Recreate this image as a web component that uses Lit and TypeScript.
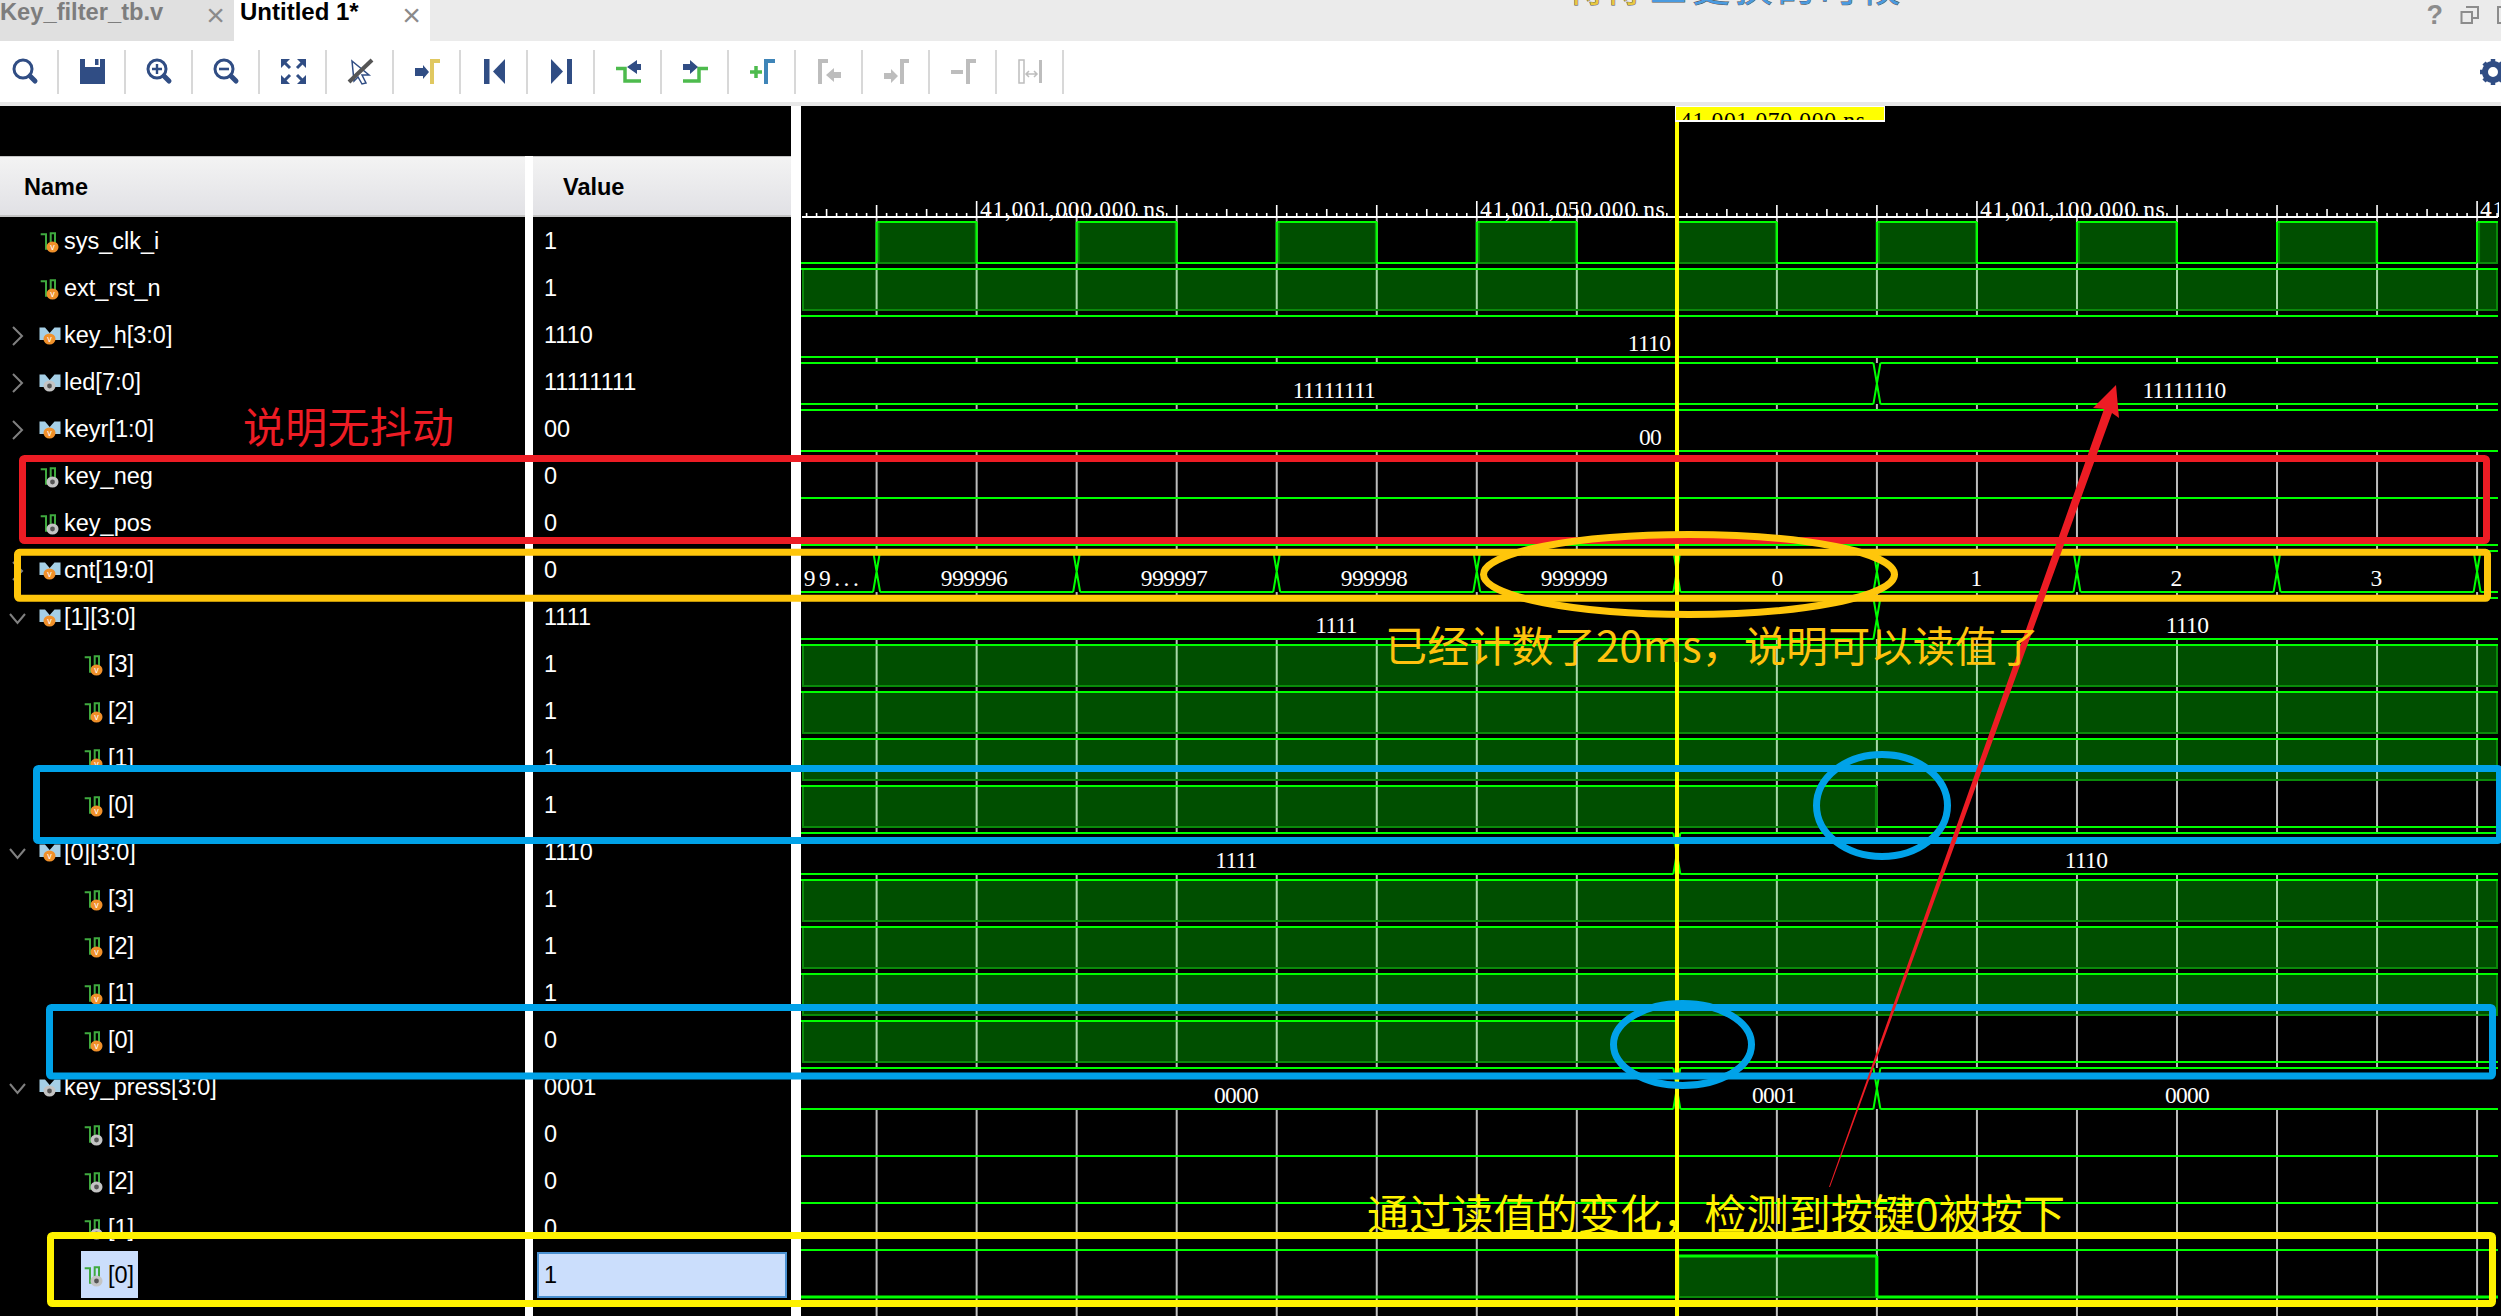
import { LitElement, html, svg, css } from 'lit';
import { customElement } from 'lit/decorators.js';

// --- waveform geometry, in page pixels ---
const END = 2498;
const T = (k: number) => 876.6 + 100.03 * k;
const EDGES = Array.from({ length: 17 }, (_, k) => T(k));
const top = (i: number) => 222 + 47 * i;
const bot = (i: number) => 263 + 47 * i;
const GREEN = '#00ff00';
const DIM = '#0a8a0a';
const FILL = '#004f00';
const NUM_FONT = "'Liberation Serif', serif";

type Wave =
  | { kind: 'bit'; highs: number[][]; strong?: boolean; thick?: boolean }
  | { kind: 'bus'; stops: number[]; labels: [string, number][] };

interface Row {
  name: string;
  value: string;
  icon: 'wire' | 'bus';
  tone: 'orange' | 'gray';
  child?: boolean;
  twist?: 'right' | 'down';
  selected?: boolean;
  wave: Wave;
}

const HIGH: Wave = { kind: 'bit', highs: [[801, END]] };
const LOW: Wave = { kind: 'bit', highs: [] };
const clockHighs: number[][] = [];
for (let k = 0; k < 17; k += 2) clockHighs.push([T(k), k + 1 < 17 ? T(k + 1) : END]);

const ROWS: Row[] = [
  { name: 'sys_clk_i', value: '1', icon: 'wire', tone: 'orange', wave: { kind: 'bit', highs: clockHighs, strong: true } },
  { name: 'ext_rst_n', value: '1', icon: 'wire', tone: 'orange', wave: HIGH },
  { name: 'key_h[3:0]', value: '1110', icon: 'bus', tone: 'orange', twist: 'right', wave: { kind: 'bus', stops: [], labels: [['1110', 1649]] } },
  { name: 'led[7:0]', value: '11111111', icon: 'bus', tone: 'gray', twist: 'right', wave: { kind: 'bus', stops: [T(10)], labels: [['11111111', 1334], ['11111110', 2184]] } },
  { name: 'keyr[1:0]', value: '00', icon: 'bus', tone: 'orange', twist: 'right', wave: { kind: 'bus', stops: [], labels: [['00', 1650]] } },
  { name: 'key_neg', value: '0', icon: 'wire', tone: 'gray', wave: LOW },
  { name: 'key_pos', value: '0', icon: 'wire', tone: 'gray', wave: LOW },
  {
    name: 'cnt[19:0]', value: '0', icon: 'bus', tone: 'orange', twist: 'right',
    wave: {
      kind: 'bus',
      stops: EDGES.filter((_, k) => k % 2 === 0),
      labels: [['99...', 833], ['999996', 974], ['999997', 1174], ['999998', 1374], ['999999', 1574], ['0', 1777], ['1', 1976], ['2', 2176], ['3', 2376]],
    },
  },
  { name: '[1][3:0]', value: '1111', icon: 'bus', tone: 'orange', twist: 'down', wave: { kind: 'bus', stops: [T(10)], labels: [['1111', 1336], ['1110', 2187]] } },
  { name: '[3]', value: '1', icon: 'wire', tone: 'orange', child: true, wave: HIGH },
  { name: '[2]', value: '1', icon: 'wire', tone: 'orange', child: true, wave: HIGH },
  { name: '[1]', value: '1', icon: 'wire', tone: 'orange', child: true, wave: HIGH },
  { name: '[0]', value: '1', icon: 'wire', tone: 'orange', child: true, wave: { kind: 'bit', highs: [[801, T(10)]] } },
  { name: '[0][3:0]', value: '1110', icon: 'bus', tone: 'orange', twist: 'down', wave: { kind: 'bus', stops: [T(8)], labels: [['1111', 1236], ['1110', 2086]] } },
  { name: '[3]', value: '1', icon: 'wire', tone: 'orange', child: true, wave: HIGH },
  { name: '[2]', value: '1', icon: 'wire', tone: 'orange', child: true, wave: HIGH },
  { name: '[1]', value: '1', icon: 'wire', tone: 'orange', child: true, wave: HIGH },
  { name: '[0]', value: '0', icon: 'wire', tone: 'orange', child: true, wave: { kind: 'bit', highs: [[801, T(8)]] } },
  { name: 'key_press[3:0]', value: '0001', icon: 'bus', tone: 'gray', twist: 'down', wave: { kind: 'bus', stops: [T(8), T(10)], labels: [['0000', 1236], ['0001', 1774], ['0000', 2187]] } },
  { name: '[3]', value: '0', icon: 'wire', tone: 'gray', child: true, wave: LOW },
  { name: '[2]', value: '0', icon: 'wire', tone: 'gray', child: true, wave: LOW },
  { name: '[1]', value: '0', icon: 'wire', tone: 'gray', child: true, wave: LOW },
  { name: '[0]', value: '1', icon: 'wire', tone: 'gray', child: true, selected: true, wave: { kind: 'bit', highs: [[T(8), T(10)]], strong: true, thick: true } },
];

// --- toolbar icons, drawn in page coordinates ---
const BLUE = '#304d84';
const GOLD = '#e0c860';
const LEAF = '#4dbb4d';
const SKY = '#3f85b8';
const MUTE = '#bdbdbd';

const lens = (cx: number, extra = svg``) => svg`
  <circle cx=${cx} cy="69" r="9" fill="none" stroke=${BLUE} stroke-width="3"></circle>
  <line x1=${cx + 7} y1="76" x2=${cx + 12} y2="81" stroke=${BLUE} stroke-width="5" stroke-linecap="round"></line>
  ${extra}`;

const corner = (x: number, y: number, dx: number, dy: number) => svg`
  <polygon points="${x},${y} ${x + 9 * dx},${y} ${x},${y + 9 * dy}" fill=${BLUE}></polygon>
  <line x1=${x + 3 * dx} y1=${y + 3 * dy} x2=${x + 9 * dx} y2=${y + 9 * dy} stroke=${BLUE} stroke-width="3"></line>`;

const gamma = (x: number, w: number, color: string) => svg`
  <path d="M${x} 59H${x + w}V63H${x + 4}V84H${x}Z" fill=${color}></path>`;

const TOOLS = [
  lens(23),
  svg`<path d="M80 59H85V67H100V59H105V84H80Z" fill=${BLUE}></path><rect x="95" y="59" width="3.5" height="6" fill=${BLUE}></rect>`,
  lens(157, svg`<path d="M157 64V74M152 69H162" stroke=${BLUE} stroke-width="2.4"></path>`),
  lens(224, svg`<path d="M219 69H229" stroke=${BLUE} stroke-width="2.6"></path>`),
  svg`${corner(281, 59, 1, 1)}${corner(306, 59, -1, 1)}${corner(281, 84, 1, -1)}${corner(306, 84, -1, -1)}`,
  svg`<path d="M352 61L369 75H362L366 83L362 84L358 77L354 81Z" fill="#fff" stroke=${BLUE} stroke-width="1.5"></path>
    <line x1="349" y1="82" x2="372" y2="60" stroke="#555" stroke-width="4"></line>`,
  svg`<path d="M415 68H423V65L429 72L423 79V76H415Z" fill=${BLUE}></path>${gamma(430, 10, GOLD)}`,
  svg`<rect x="484" y="59" width="5.5" height="25" fill=${BLUE}></rect><polygon points="505,59 505,84 493,71.5" fill=${BLUE}></polygon>`,
  svg`<polygon points="551,59 551,84 563,71.5" fill=${BLUE}></polygon><rect x="567" y="59" width="5" height="25" fill=${BLUE}></rect>`,
  svg`<path d="M616 68.5H625V81H641" fill="none" stroke=${LEAF} stroke-width="3.5"></path>
    <path d="M627 67L637 60V64H641V70H637V74Z" fill=${BLUE}></path>`,
  svg`<path d="M683 81H699V68.5H708" fill="none" stroke=${LEAF} stroke-width="3.5"></path>
    <path d="M683 64H690V60L698 67L690 74V70H683Z" fill=${BLUE}></path>`,
  svg`<path d="M750 72H762M756 66V78" stroke=${LEAF} stroke-width="3.5"></path>${gamma(764, 11, SKY)}`,
  svg`${gamma(818, 10, MUTE)}<path d="M826 75L834 68V72H841V78H834V82Z" fill=${MUTE}></path>`,
  svg`<path d="M884 73H891V69L898 76L891 83V79H884Z" fill=${MUTE}></path>${gamma(900, 9, MUTE)}`,
  svg`<rect x="951" y="70" width="12" height="4" fill=${MUTE}></rect>${gamma(966, 10, MUTE)}`,
  svg`<rect x="1019" y="60" width="5" height="23" fill="none" stroke=${MUTE} stroke-width="1.5"></rect>
    <rect x="1039" y="60" width="3" height="23" fill=${MUTE}></rect>
    <path d="M1026 74H1037M1029 71L1026 74L1029 77M1034 71L1037 74L1034 77" fill="none" stroke=${MUTE} stroke-width="1.5"></path>`,
];

@customElement('app-root')
export class AppRoot extends LitElement {
  static styles = css`
    :host {
      display: block;
      position: relative;
      width: 2501px;
      height: 1316px;
      overflow: hidden;
      background: #000;
      font-family: 'Liberation Sans', Arial, sans-serif;
    }

    .tabbar {
      display: flex;
      height: 41px;
      background: #ebebeb;
      font-size: 24px;
      font-weight: bold;
      line-height: 24px;
    }
    .tab {
      display: flex;
      justify-content: space-between;
      box-sizing: border-box;
    }
    .tab .close {
      font-weight: normal;
      font-size: 32px;
      line-height: 30px;
      color: #8a8a8a;
    }
    .tab.off {
      width: 234px;
      background: #e0e0e0;
      color: #7d7d7d;
      padding-right: 9px;
      font-size: 23.7px;
    }
    .tab.on {
      width: 196px;
      background: #fff;
      color: #000;
      padding: 0 9px 0 6px;
    }
    .win {
      margin-left: auto;
      display: flex;
      align-items: center;
      gap: 17px;
      height: 30px;
      margin-right: -16px;
      color: #8c8c8c;
      font-size: 27px;
    }

    .toolbar {
      display: flex;
      height: 61px;
      background: #fff;
      margin-left: -8px;
      align-items: center;
    }
    .tool {
      display: block;
      width: 65px;
      height: 61px;
    }
    .sep {
      width: 2px;
      height: 44px;
      background: #d8d8d8;
    }
    .gear {
      margin-left: auto;
      margin-right: -5px;
    }
    .strip {
      height: 4px;
      background: #e8e8e8;
    }

    .main {
      display: grid;
      grid-template-columns: 525px 8px 258px 10px 1fr;
      height: 1210px;
    }
    .col {
      background: #000;
      padding-top: 50px;
      color: #fff;
      font-size: 23.5px;
    }
    .head {
      box-sizing: border-box;
      height: 61px;
      padding-top: 2px;
      display: flex;
      align-items: center;
      font-weight: bold;
      color: #000;
      background: linear-gradient(#f3f3f3, #e1e1e5);
      border-top: 1px solid #c4c4c4;
      border-bottom: 2px solid #c4c4c4;
    }
    .name .head {
      padding-left: 24px;
    }
    .value .head {
      padding-left: 30px;
    }
    .gutter {
      margin-top: 50px;
      background: #fff;
    }
    .rule {
      background: #fff;
    }

    .row {
      height: 47px;
      display: flex;
      align-items: center;
      box-sizing: border-box;
    }
    .name .row {
      padding-left: 8px;
    }
    .value .row {
      padding: 2px 0 0 11px;
    }
    .value .row.sel {
      margin: 1px 4px 0;
      height: 46px;
      padding: 1px 0 0 5px;
      border: 2px solid #4a90d0;
      background: #cbdefc;
      color: #000;
    }
    .twist {
      width: 30px;
      height: 24px;
      flex: none;
      margin-top: 2px;
    }
    .node {
      display: flex;
      align-items: center;
      gap: 2px;
      box-sizing: border-box;
      height: 47px;
      padding: 2px 4px 0 2px;
    }
    .node.child {
      margin-left: 43px;
      padding-left: 3px;
    }
    .node.sel {
      background: #cbdefc;
      color: #000;
    }
    .icon {
      display: block;
      flex: none;
    }
    .wave {
      display: block;
      width: 1700px;
      height: 1210px;
    }
    .marks {
      position: absolute;
      left: 0;
      top: 0;
      pointer-events: none;
    }
  `;

  renderNodeIcon(row: Row) {
    const bus = row.icon === 'bus';
    const cx = bus ? 9.5 : 12.5;
    const cy = bus ? 15 : 17;
    const dot = row.tone === 'orange'
      ? svg`<ellipse cx=${cx} cy=${cy} rx="6" ry="5.5" fill="#f0902a"></ellipse>
          <text x=${cx} y=${cy + 3} font-size="9" text-anchor="middle" fill="#fff">v</text>`
      : svg`<ellipse cx=${cx} cy=${cy} rx="6" ry="5.5" fill="#c4c4c4"></ellipse>
          <circle cx=${cx} cy=${cy} r="2.4" fill="#555"></circle>`;
    const shape = bus
      ? svg`<path d="M-.5 3.5H5L9.7 9L14.5 3.5H20.5V16H-.5Z" fill="#a5cfe6"></path>`
      : svg`<path d="M.7 4.3H6V18.7H10M10.7 18V3.3H15V14" fill="none" stroke="#3faa3f" stroke-width="2"></path>`;
    return html`<svg class="icon" width="22" height="24" viewBox="0 0 22 24" overflow="visible">${shape}${dot}</svg>`;
  }

  renderTwist(kind?: 'right' | 'down') {
    if (!kind) return html`<span class="twist"></span>`;
    const points = kind === 'right' ? '5,3 14,12 5,21' : '2,8 9.5,17 17,8';
    return html`<svg class="twist" viewBox="0 0 30 24">
      <polyline points=${points} fill="none" stroke="#808080" stroke-width="2"></polyline>
    </svg>`;
  }

  renderBit(i: number, wave: { highs: number[][]; strong?: boolean; thick?: boolean }) {
    const y0 = top(i);
    const y1 = bot(i);
    const width = wave.thick ? 3 : 2;
    const parts = [];
    const flats: string[] = [];
    let verticals = '';
    let from = 801;
    for (const [a, b] of wave.highs) {
      if (a > from) flats.push(`M${from} ${y1}H${a}`);
      flats.push(`M${a} ${y0}H${b}`);
      if (a > 801) verticals += `M${a} ${y0}V${y1}`;
      if (b < END) verticals += `M${b} ${y0}V${y1}`;
      from = b;
      parts.push(svg`<rect x=${a + 2} y=${y0} width=${b - a - 3} height=${y1 - y0} fill=${FILL} stroke=${DIM} stroke-width="2"></rect>`);
      for (const g of EDGES) {
        if (g > a + 1 && g < b - 1) parts.push(svg`<line x1=${g} x2=${g} y1=${y0} y2=${y1 - 1} stroke="#a8d8a8" stroke-width="2"></line>`);
      }
    }
    if (from < END) flats.push(`M${from} ${y1}H${END}`);
    return svg`${parts}
      <path d=${verticals} fill="none" stroke=${wave.strong ? GREEN : DIM} stroke-width=${width}></path>
      <path d=${flats.join('')} fill="none" stroke=${GREEN} stroke-width=${width}></path>`;
  }

  renderBus(i: number, wave: { stops: number[]; labels: [string, number][] }) {
    const y0 = top(i);
    const y1 = bot(i);
    let d = '';
    let from = 801;
    for (const s of wave.stops) {
      d += `M${from} ${y0}H${s - 3.5}M${from} ${y1}H${s - 3.5}M${s - 3.5} ${y0}L${s + 3.5} ${y1}M${s + 3.5} ${y0}L${s - 3.5} ${y1}`;
      from = s + 3.5;
    }
    d += `M${from} ${y0}H${END}M${from} ${y1}H${END}`;
    return svg`
      <rect x="801" y=${y0} width="1700" height=${y1 - y0} fill="#000"></rect>
      <path d=${d} fill="none" stroke=${GREEN} stroke-width="2"></path>
      ${wave.labels.map(([t, x]) => svg`<text x=${x} y=${y1 - 6} text-anchor="middle" fill="#fff" font-family=${NUM_FONT} font-size="23.5" letter-spacing=${t === '99...' ? 3.5 : -0.7}>${t}</text>`)}`;
  }

  renderRuler() {
    let ticks = '';
    for (let k = -7; k < 170; k++) {
      const x = 876.6 + k * 10.003;
      if (x > END) break;
      const major = ((k % 10) + 10) % 10 === 0;
      const mid = ((k % 10) + 10) % 10 === 5;
      const n = Math.round(k / 10);
      const tall = major && (n - 1) % 5 === 0;
      const h = tall ? 16 : major ? 12 : mid ? 8 : 4;
      ticks += `M${x} 217V${217 - h}`;
    }
    const labels: [string, number][] = [
      ['41,001,000.000 ns', 980],
      ['41,001,050.000 ns', 1480],
      ['41,001,100.000 ns', 1980],
      ['41,001,150.000 ns', 2480],
    ];
    return svg`
      <path d=${ticks} stroke="#fff" stroke-width="1.6"></path>
      <rect x="802" y="216" width="1696" height="2" fill="#fff"></rect>
      <g clip-path="url(#rulerclip)">
        ${labels.map(([t, x]) => svg`<text x=${x} y="216.5" fill="#fff" font-family=${NUM_FONT} font-size="23.5" letter-spacing="0.7">${t}</text>`)}
      </g>`;
  }

  renderWave() {
    return html`<svg class="wave" viewBox="801 106 1700 1210">
      <defs>
        <clipPath id="rulerclip"><rect x="801" y="190" width="1698" height="40"></rect></clipPath>
        <clipPath id="cursorclip"><rect x="1676" y="107" width="208" height="13"></rect></clipPath>
      </defs>
      ${EDGES.map((x) => svg`<line x1=${x} x2=${x} y1="218" y2="1316" stroke="#bdbdbd" stroke-width="2"></line>`)}
      ${ROWS.map((row, i) => (row.wave.kind === 'bit' ? this.renderBit(i, row.wave) : this.renderBus(i, row.wave)))}
      ${this.renderRuler()}
      <rect x="1675" y="106" width="210" height="16" fill="#fff"></rect>
      <rect x="1676" y="107" width="208" height="13" fill="#ffff00"></rect>
      <g clip-path="url(#cursorclip)">
        <text x="1680" y="128" fill="#000" font-family=${NUM_FONT} font-size="23.5" letter-spacing="0.7">41,001,070.000 ns</text>
      </g>
      <rect x="1675" y="122" width="4" height="1194" fill="#ffff00"></rect>
    </svg>`;
  }

  renderMarks() {
    const cjk = "'Noto Sans CJK SC', 'Liberation Sans', sans-serif";
    return html`<svg class="marks" width="2501" height="1316" viewBox="0 0 2501 1316">
      <g font-family=${cjk} font-size="37" stroke="#555" stroke-width="1" paint-order="stroke">
        <text x="1568" y="2" fill="#e8c840">待待</text>
        <text x="1650" y="2" fill="#4a9be0" textLength="250">三更换的时候</text>
      </g>
      <g fill="none" stroke-width="7">
        <rect x="22.5" y="458.5" width="2464" height="82" rx="2" stroke="#ed1c24"></rect>
        <rect x="17.5" y="552.3" width="2470" height="46" rx="2" stroke="#ffc60b"></rect>
        <ellipse cx="1689" cy="574.5" rx="205.5" ry="40" stroke="#ffc60b"></ellipse>
        <rect x="36.5" y="768.5" width="2463" height="72" rx="2" stroke="#00a2e8"></rect>
        <rect x="49.5" y="1007.5" width="2443" height="68.5" rx="2" stroke="#00a2e8"></rect>
        <ellipse cx="1882" cy="805.5" rx="65.5" ry="51" stroke="#00a2e8"></ellipse>
        <ellipse cx="1682.5" cy="1044.5" rx="69" ry="41" stroke="#00a2e8"></ellipse>
        <rect x="50.5" y="1235.5" width="2442" height="68" rx="2" stroke="#fff200"></rect>
      </g>
      <polygon points="1829,1187 2104,409 2093,408 2116,385 2119,418 2112,413 1830,1187" fill="#ed1c24"></polygon>
      <g font-family=${cjk} font-size="42">
        <text x="243" y="443" fill="#ed1c24" textLength="211">说明无抖动</text>
        <text x="1385" y="662" fill="#ffc20e" textLength="654">已经计数了20ms，说明可以读值了</text>
        <text x="1367" y="1230" fill="#fff200" textLength="698">通过读值的变化，检测到按键0被按下</text>
      </g>
    </svg>`;
  }

  render() {
    return html`
      <div class="tabbar">
        <div class="tab off"><span>Key_filter_tb.v</span><span class="close">×</span></div>
        <div class="tab on"><span>Untitled 1*</span><span class="close">×</span></div>
        <div class="win">
          <span>?</span>
          <svg width="20" height="18" viewBox="0 0 20 18">
            <path d="M6 1H18V12H13M1.5 6H12V17H1.5Z" fill="none" stroke="#8c8c8c" stroke-width="2"></path>
          </svg>
          <svg width="20" height="18" viewBox="0 0 20 18">
            <rect x="1" y="1" width="18" height="16" fill="none" stroke="#8c8c8c" stroke-width="2"></rect>
          </svg>
        </div>
      </div>
      <div class="toolbar">
        ${TOOLS.map((icon, i) => html`
          <svg class="tool" viewBox="${-8 + 67 * i} 41 65 61">${icon}</svg>
          <span class="sep"></span>
        `)}
        <svg class="gear" width="26" height="26" viewBox="-13 -13 26 26">
          <circle r="8" fill="none" stroke=${BLUE} stroke-width="6"></circle>
          <path d="M0-13V-8M0 13V8M-13 0H-8M13 0H8M-9-9L-6-6M9 9L6 6M-9 9L-6 6M9-9L6-6" stroke=${BLUE} stroke-width="4.5"></path>
        </svg>
      </div>
      <div class="strip"></div>
      <div class="main">
        <div class="col name">
          <div class="head">Name</div>
          ${ROWS.map((row) => html`
            <div class="row">
              ${this.renderTwist(row.twist)}
              <div class="node ${row.child ? 'child' : ''} ${row.selected ? 'sel' : ''}">
                ${this.renderNodeIcon(row)}<span>${row.name}</span>
              </div>
            </div>
          `)}
        </div>
        <div class="gutter"></div>
        <div class="col value">
          <div class="head">Value</div>
          ${ROWS.map((row) => html`<div class="row ${row.selected ? 'sel' : ''}">${row.value}</div>`)}
        </div>
        <div class="rule"></div>
        ${this.renderWave()}
      </div>
      ${this.renderMarks()}
    `;
  }
}
